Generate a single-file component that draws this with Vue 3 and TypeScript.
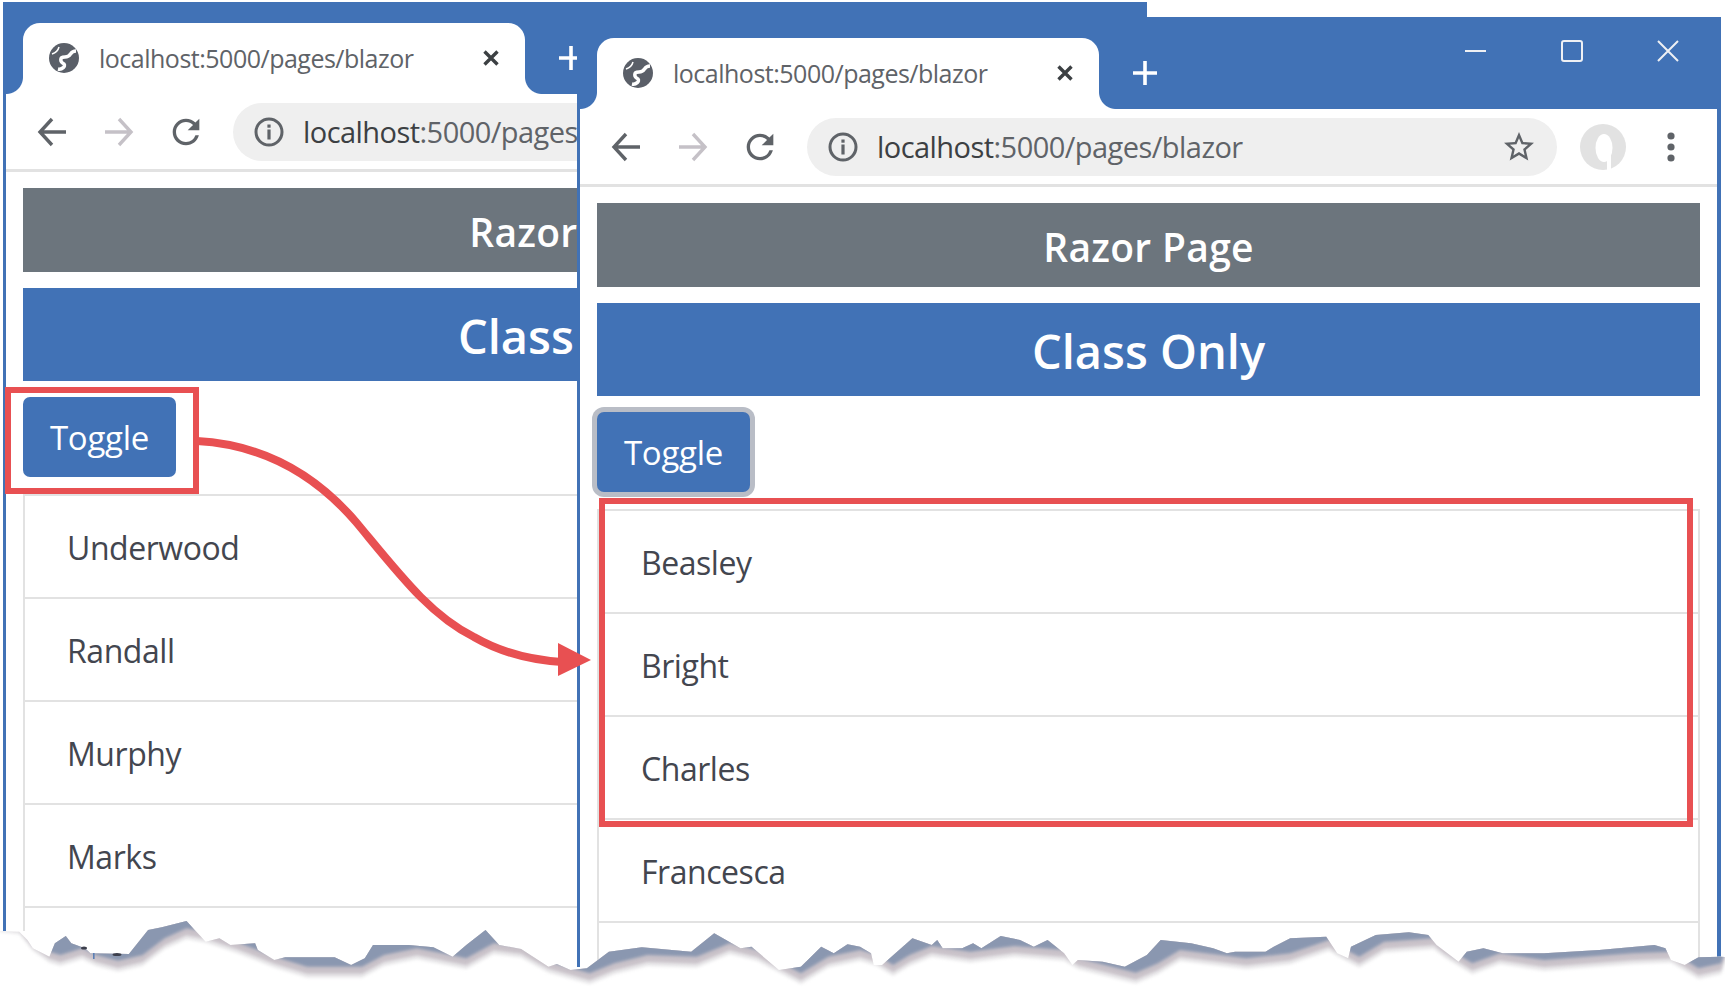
<script setup lang="ts">
type Pt = [number, number]
const L = (pts: number[][]): Pt[] => pts.map(([x, y]) => [x / 1.823, 850 + y / 3])
const R = (pts: number[][]): Pt[] => pts.map(([x, y]) => [860 + x / 1.8127, 850 + y / 3])

const edge: Pt[] = [
  [0, 931],
  ...L([[35,245],[50,270],[60,295],[90,320],[100,280],[120,258],[130,280],[155,295],[165,310],[235,312],[270,240],[295,232],[340,213],[355,240],[375,275],[400,265],[420,285],[465,280],[470,300],[500,330],[520,322],[570,322],[610,322],[640,345],[665,325],[680,285],[745,285],[790,292],[825,320],[850,285],[885,240],[910,285],[950,297],[1000,350],[1015,342],[1040,360],[1070,355],[1110,305],[1170,292],[1260,305],[1302,250],[1350,295],[1370,290],[1420,360],[1460,350],[1497,290],[1520,310],[1545,283]]),
  ...R([[0,290],[20,310],[25,345],[40,345],[95,265],[130,285],[140,270],[150,295],[185,295],[205,280],[220,295],[255,258],[290,270],[315,290],[340,270],[370,310],[385,345],[395,330],[440,335],[480,350],[520,315],[545,270],[600,280],[640,295],[665,310],[680,305],[735,305],[750,290],[780,265],[845,260],[865,310],[885,325],[890,290],[935,255],[995,247],[1030,255],[1045,285],[1085,335],[1100,305],[1130,295],[1165,310],[1240,310],[1340,300],[1440,285],[1460,295],[1470,330],[1495,345],[1520,322],[1561,320]]),
  [1725, 957],
]
const under: Pt[] = [
  [0, 931],
  ...L([[35,250],[60,300],[90,335],[110,345],[150,325],[175,345],[215,362],[260,345],[300,295],[340,265],[375,275],[430,305],[500,350],[560,380],[660,380],[700,345],[760,325],[850,355],[900,310],[950,320],[1000,365],[1075,400],[1120,370],[1180,345],[1270,350],[1330,310],[1380,330],[1460,400],[1510,350]]),
  ...R([[0,330],[30,345],[60,375],[90,345],[130,318],[200,335],[280,318],[370,330],[395,355],[500,398],[540,370],[580,330],[700,355],[780,340],[850,300],[870,320],[905,350],[950,305],[1040,295],[1060,320],[1110,370],[1160,340],[1240,360],[1400,340],[1470,335],[1520,385],[1561,370]]),
  [1725, 960],
]
const toD = (pts: Pt[], dy = 0) => pts.map(([x, y]) => `${x.toFixed(1)},${(y + dy).toFixed(1)}`).join(' L')
const clipD = `M${toD(edge)} L1725,993 L0,993 Z`
const band = (dy: number) => `M0,0 L${toD(under, dy)} L1725,0 Z`
const layers = [
  { d: band(1), cls: 'soft-a' },
  { d: band(-3), cls: 'soft-b' },
  { d: band(-10), cls: 'soft-c' },
]

const windows = [
  { id: 'win-left', names: ['Underwood', 'Randall', 'Murphy', 'Marks', ''], ring: false },
  { id: 'win-right', names: ['Beasley', 'Bright', 'Charles', 'Francesca', ''], ring: true },
]
</script>

<template>
  <div class="page">
    <section v-for="w in windows" :key="w.id" class="win" :class="w.id">
      <header class="titlebar">
        <div class="tab">
          <svg class="globe" viewBox="0 0 30 30">
            <circle cx="15" cy="15" r="15" fill="#5a5f68" />
            <path d="M27 8C20 8 23 14 16 14C10 14 11 19 15 21C17 23 13 27 9 26" fill="none" stroke="#fff" stroke-width="3.4" />
            <path d="M3 11C6 10 9 8 10 4" fill="none" stroke="#fff" stroke-width="1.5" />
          </svg>
          <span class="tab-title">localhost:5000/pages/blazor</span>
          <svg class="tab-x" viewBox="0 0 16 16">
            <path d="M1.5 1.5L14.5 14.5M14.5 1.5L1.5 14.5" stroke="#3c4043" stroke-width="3.4" />
          </svg>
        </div>
        <svg class="plus" viewBox="0 0 24 24">
          <path d="M12 0V24M0 12H24" stroke="#fff" stroke-width="3.6" />
        </svg>
        <div class="caption">
          <svg class="cap" viewBox="0 0 22 22"><path d="M0 11H21" stroke="#eef0f4" stroke-width="2" /></svg>
          <svg class="cap" viewBox="0 0 22 22"><rect x="1" y="1" width="20" height="20" rx="2" fill="none" stroke="#eef0f4" stroke-width="2" /></svg>
          <svg class="cap" viewBox="0 0 22 22"><path d="M1 1L21 21M21 1L1 21" stroke="#eef0f4" stroke-width="2" /></svg>
        </div>
      </header>

      <div class="body">
        <nav class="toolbar">
          <svg class="nav" viewBox="0 0 30 30"><path d="M29 15H4M15 2L3 15L15 28" fill="none" stroke="#5f6368" stroke-width="3.4" /></svg>
          <svg class="nav" viewBox="0 0 30 30"><path d="M1 15H26M15 2L27 15L15 28" fill="none" stroke="#c5c1c7" stroke-width="3.4" /></svg>
          <svg class="nav" viewBox="3 3 18 18"><path fill="#5f6368" d="M17.65 6.35A7.958 7.958 0 0012 4c-4.42 0-7.99 3.58-7.99 8s3.57 8 7.99 8c3.73 0 6.84-2.55 7.73-6h-2.08A5.99 5.99 0 0112 18c-3.31 0-6-2.69-6-6s2.69-6 6-6c1.66 0 3.14.69 4.22 1.78L13 11h7V4l-2.35 2.35z" /></svg>
          <div class="omnibox">
            <svg class="info" viewBox="0 0 30 30">
              <circle cx="15" cy="15" r="13" fill="none" stroke="#5f6368" stroke-width="3" />
              <rect x="13.4" y="7.5" width="3.2" height="3.2" fill="#5f6368" />
              <rect x="13.4" y="12.5" width="3.2" height="10" fill="#5f6368" />
            </svg>
            <span class="url"><b>localhost</b>:5000/pages/blazor</span>
            <svg class="star" viewBox="0 0 24 24"><path fill="#5f6368" d="M22 9.24l-7.19-.62L12 2 9.19 8.63 2 9.24l5.46 4.73L5.82 21 12 17.27 18.18 21l-1.63-7.03L22 9.24zM12 15.4l-3.76 2.27 1-4.28-3.32-2.88 4.38-.38L12 6.1l1.71 4.04 4.38.38-3.32 2.88 1 4.28L12 15.4z" /></svg>
          </div>
          <svg class="avatar" viewBox="0 0 46 46">
            <circle cx="23" cy="23" r="23" fill="#e2e2e2" />
            <ellipse cx="24" cy="24" rx="8.5" ry="14" fill="#fff" />
            <rect x="27" y="30" width="4" height="16" fill="#fff" />
          </svg>
          <svg class="kebab" viewBox="0 0 8 30">
            <circle cx="4" cy="4" r="3.6" fill="#5f6368" />
            <circle cx="4" cy="15" r="3.6" fill="#5f6368" />
            <circle cx="4" cy="26" r="3.6" fill="#5f6368" />
          </svg>
        </nav>

        <main class="content">
          <div class="bar bar-gray">Razor Page</div>
          <div class="bar bar-blue">Class Only</div>
          <button class="toggle" :class="{ focused: w.ring }" type="button">Toggle</button>
          <ul class="list">
            <li v-for="(n, i) in w.names" :key="i">{{ n }}</li>
          </ul>
        </main>
      </div>
    </section>

    <div class="mark mark-left"></div>
    <div class="mark mark-right"></div>

    <svg class="overlay" viewBox="0 0 1725 993" width="1725" height="993">
      <defs>
        <clipPath id="below-tear"><path :d="clipD" /></clipPath>
      </defs>
      <path d="M197,441 C270,445 320,480 356,522 C400,575 430,615 474,637 C500,652 530,660 562,662" fill="none" stroke="#e85052" stroke-width="8" />
      <path d="M558,643 L591,660 L558,676 Z" fill="#e85052" />
      <g clip-path="url(#below-tear)">
        <rect x="0" y="850" width="1725" height="143" fill="#fff" />
        <path v-for="l in layers" :key="l.cls" :d="l.d" :class="l.cls" />
      </g>
      <ellipse cx="84" cy="948" rx="3" ry="1.6" fill="#3c3f4c" />
      <ellipse cx="117" cy="954.5" rx="4.5" ry="1.6" fill="#3c3f4c" />
      <rect x="93" y="953" width="1.6" height="6" fill="#5a7fb5" />
    </svg>
  </div>
</template>

<style scoped>
.page {
  position: relative;
  width: 1725px;
  height: 993px;
  overflow: hidden;
  background: #fff;
  font-family: "Open Sans", "Noto Sans", "Liberation Sans", sans-serif;
}
.win {
  position: absolute;
  display: flex;
  flex-direction: column;
  box-sizing: border-box;
  background: #4172b6;
  border-left: 3px solid #4172b6;
  border-right: 4px solid #4172b6;
  overflow: hidden;
}
.win-left { left: 3px; top: 2px; width: 1144px; height: 929px; }
.win-right { left: 577px; top: 17px; width: 1144px; height: 950px; }

.titlebar {
  position: relative;
  flex: none;
  height: 92px;
  padding: 21px 0 0 17px;
  box-sizing: border-box;
  display: flex;
  align-items: flex-start;
}
.tab {
  position: relative;
  width: 502px;
  height: 71px;
  box-sizing: border-box;
  padding: 0 20px 2px 26px;
  display: flex;
  align-items: center;
  gap: 20px;
  background: #fff;
  border-radius: 17px 17px 0 0;
}
.tab::before,
.tab::after {
  content: "";
  position: absolute;
  bottom: 0;
  width: 17px;
  height: 17px;
}
.tab::before {
  left: -17px;
  background: radial-gradient(circle at 0 0, #4172b6 16.5px, #fff 17.5px);
}
.tab::after {
  right: -17px;
  background: radial-gradient(circle at 100% 0, #4172b6 16.5px, #fff 17.5px);
}
.globe { width: 30px; height: 30px; flex: none; }
.tab-title {
  flex: 1;
  font-size: 25px;
  letter-spacing: -0.5px;
  color: #5f6368;
  white-space: nowrap;
}
.tab-x { width: 16px; height: 16px; flex: none; margin-right: 6px; }
.plus { width: 24px; height: 24px; flex: none; margin: 23px 0 0 34px; }
.caption {
  position: absolute;
  top: 23px;
  right: 38px;
  display: flex;
  gap: 74px;
}
.cap { width: 22px; height: 22px; }

.body {
  flex: 1;
  min-height: 0;
  background: #fff;
  display: flex;
  flex-direction: column;
}
.toolbar {
  flex: none;
  height: 78px;
  box-sizing: border-box;
  border-bottom: 3px solid #e2e2e2;
  padding: 0 0 0 31px;
  display: flex;
  align-items: center;
  gap: 37px;
}
.nav { width: 30px; height: 30px; flex: none; }
.omnibox {
  flex: none;
  width: 750px;
  height: 58px;
  margin-left: -5px;
  box-sizing: border-box;
  padding: 0 20px 0 21px;
  border-radius: 29px;
  background: #efefef;
  display: flex;
  align-items: center;
  gap: 19px;
}
.info { width: 30px; height: 30px; flex: none; }
.url {
  flex: 1;
  font-size: 29px;
  letter-spacing: -0.55px;
  color: #5f6368;
  white-space: nowrap;
}
.url b { font-weight: 400; color: #3c4043; }
.star { width: 36px; height: 36px; flex: none; }
.avatar { width: 46px; height: 46px; flex: none; margin-left: -14px; }
.kebab { width: 8px; height: 30px; flex: none; margin-left: 4px; }

.content {
  flex: 1;
  padding: 16px 17px 0;
  display: flex;
  flex-direction: column;
  align-items: stretch;
}
.bar {
  color: #fff;
  display: flex;
  align-items: center;
  justify-content: center;
  font-weight: 600;
  box-sizing: border-box;
  padding-top: 3px;
}
.bar-gray {
  height: 84px;
  background: #6c757d;
  font-size: 39px;
  letter-spacing: 0.3px;
}
.bar-blue {
  height: 93px;
  margin-top: 16px;
  background: #4172b6;
  font-size: 47px;
}
.toggle {
  align-self: flex-start;
  width: 153px;
  height: 80px;
  margin-top: 16px;
  border: 0;
  border-radius: 7px;
  background: #4172b6;
  color: #fff;
  font: inherit;
  font-size: 33px;
  letter-spacing: -0.25px;
}
.toggle.focused { box-shadow: 0 0 0 5px #b9bdc6; }
.list {
  list-style: none;
  margin: 17px 0 0;
  padding: 0;
  border-top: 2px solid #e2e2e2;
  border-left: 2px solid #e2e2e2;
  border-right: 2px solid #e2e2e2;
}
.list li {
  height: 103px;
  box-sizing: border-box;
  border-bottom: 2px solid #e2e2e2;
  padding: 2px 0 0 42px;
  display: flex;
  align-items: center;
  font-size: 32px;
  letter-spacing: -0.45px;
  color: #43464f;
}

.mark {
  position: absolute;
  box-sizing: border-box;
  border: 6px solid #e85052;
}
.mark-left { left: 5px; top: 387px; width: 194px; height: 107px; }
.mark-right { left: 599px; top: 498px; width: 1094px; height: 329px; }

.overlay {
  position: absolute;
  left: 0;
  top: 0;
  pointer-events: none;
}
.soft-a { fill: #e9e8ea; filter: blur(1.4px); }
.soft-b { fill: #c9c2c9; filter: blur(1.4px); }
.soft-c { fill: #8a97b0; filter: blur(1.4px); }
</style>
